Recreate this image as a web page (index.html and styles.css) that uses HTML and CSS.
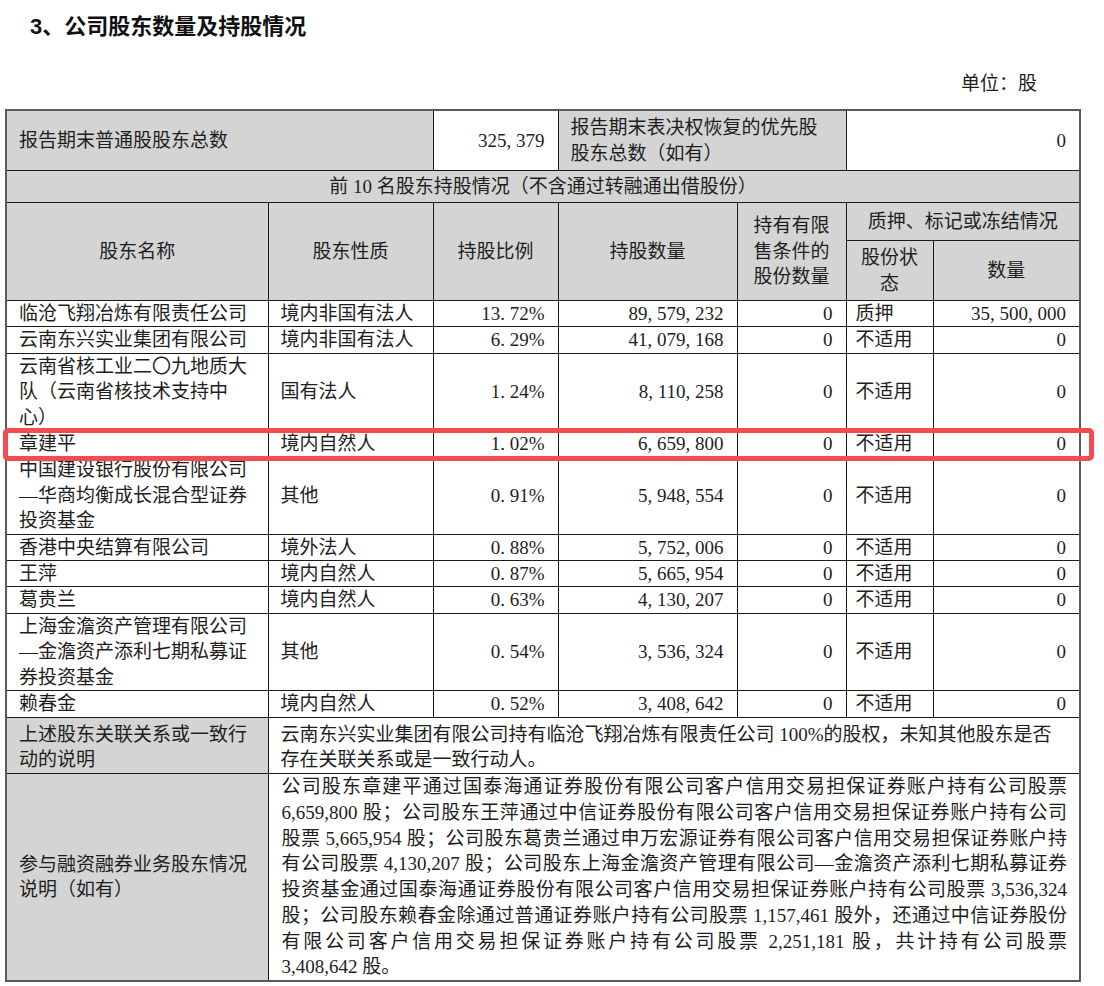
FILE: index.html
```html
<!DOCTYPE html>
<html lang="zh-CN">
<head>
<meta charset="utf-8">
<title>公司股东数量及持股情况</title>
<link rel="stylesheet" href="styles.css">
</head>
<body>
<div class="page">
  <h1 class="title">3、公司股东数量及持股情况</h1>
  <div class="unit">单位：股</div>
  <table class="holders">
    <colgroup>
      <col class="c-name"><col class="c-kind"><col class="c-ratio"><col class="c-qty"><col class="c-restr"><col class="c-state"><col class="c-pledge">
    </colgroup>
    <tr class="r-total">
      <td colspan="2" class="g">报告期末普通股股东总数</td>
      <td class="num">325, 379</td>
      <td colspan="2" class="g">报告期末表决权恢复的优先股<br>股东总数（如有）</td>
      <td colspan="2" class="num">0</td>
    </tr>
    <tr class="r-cap">
      <td colspan="7" class="g ctr">前 10 名股东持股情况（不含通过转融通出借股份）</td>
    </tr>
    <tr class="r-h1">
      <th rowspan="2">股东名称</th>
      <th rowspan="2">股东性质</th>
      <th rowspan="2">持股比例</th>
      <th rowspan="2">持股数量</th>
      <th rowspan="2">持有有限<br>售条件的<br>股份数量</th>
      <th colspan="2">质押、标记或冻结情况</th>
    </tr>
    <tr class="r-h2">
      <th>股份状<br>态</th>
      <th>数量</th>
    </tr>
    <tr>
      <td>临沧飞翔冶炼有限责任公司</td><td>境内非国有法人</td><td class="num">13. 72%</td><td class="num">89, 579, 232</td><td class="num">0</td><td class="st">质押</td><td class="num">35, 500, 000</td>
    </tr>
    <tr>
      <td>云南东兴实业集团有限公司</td><td>境内非国有法人</td><td class="num">6. 29%</td><td class="num">41, 079, 168</td><td class="num">0</td><td class="st">不适用</td><td class="num">0</td>
    </tr>
    <tr>
      <td>云南省核工业二〇九地质大<br>队（云南省核技术支持中<br>心）</td><td>国有法人</td><td class="num">1. 24%</td><td class="num">8, 110, 258</td><td class="num">0</td><td class="st">不适用</td><td class="num">0</td>
    </tr>
    <tr class="hl">
      <td class="mark-host">章建平<span class="mark"></span></td><td>境内自然人</td><td class="num">1. 02%</td><td class="num">6, 659, 800</td><td class="num">0</td><td class="st">不适用</td><td class="num">0</td>
    </tr>
    <tr>
      <td>中国建设银行股份有限公司<br>—华商均衡成长混合型证券<br>投资基金</td><td>其他</td><td class="num">0. 91%</td><td class="num">5, 948, 554</td><td class="num">0</td><td class="st">不适用</td><td class="num">0</td>
    </tr>
    <tr>
      <td>香港中央结算有限公司</td><td>境外法人</td><td class="num">0. 88%</td><td class="num">5, 752, 006</td><td class="num">0</td><td class="st">不适用</td><td class="num">0</td>
    </tr>
    <tr>
      <td>王萍</td><td>境内自然人</td><td class="num">0. 87%</td><td class="num">5, 665, 954</td><td class="num">0</td><td class="st">不适用</td><td class="num">0</td>
    </tr>
    <tr>
      <td>葛贵兰</td><td>境内自然人</td><td class="num">0. 63%</td><td class="num">4, 130, 207</td><td class="num">0</td><td class="st">不适用</td><td class="num">0</td>
    </tr>
    <tr>
      <td>上海金澹资产管理有限公司<br>—金澹资产添利七期私募证<br>券投资基金</td><td>其他</td><td class="num">0. 54%</td><td class="num">3, 536, 324</td><td class="num">0</td><td class="st">不适用</td><td class="num">0</td>
    </tr>
    <tr>
      <td>赖春金</td><td>境内自然人</td><td class="num">0. 52%</td><td class="num">3, 408, 642</td><td class="num">0</td><td class="st">不适用</td><td class="num">0</td>
    </tr>
    <tr class="r-note">
      <td class="g">上述股东关联关系或一致行<br>动的说明</td>
      <td colspan="6" class="top">云南东兴实业集团有限公司持有临沧飞翔冶炼有限责任公司 100%的股权，未知其他股东是否<br>存在关联关系或是一致行动人。</td>
    </tr>
    <tr class="r-margin">
      <td class="g">参与融资融券业务股东情况<br>说明（如有）</td>
      <td colspan="6" class="para">
        <div class="ln">公司股东章建平通过国泰海通证券股份有限公司客户信用交易担保证券账户持有公司股票</div>
        <div class="ln">6,659,800 股；公司股东王萍通过中信证券股份有限公司客户信用交易担保证券账户持有公司</div>
        <div class="ln">股票 5,665,954 股；公司股东葛贵兰通过申万宏源证券有限公司客户信用交易担保证券账户持</div>
        <div class="ln">有公司股票 4,130,207 股；公司股东上海金澹资产管理有限公司—金澹资产添利七期私募证券</div>
        <div class="ln">投资基金通过国泰海通证券股份有限公司客户信用交易担保证券账户持有公司股票 3,536,324</div>
        <div class="ln">股；公司股东赖春金除通过普通证券账户持有公司股票 1,157,461 股外，还通过中信证券股份</div>
        <div class="ln">有限公司客户信用交易担保证券账户持有公司股票 2,251,181 股，共计持有公司股票</div>
        <div class="ln last">3,408,642 股。</div>
      </td>
    </tr>
  </table>
</div>
</body>
</html>
```
FILE: styles.css
```css
html, body {
  margin: 0;
  padding: 0;
  background: #ffffff;
}

.page {
  font-family: "Liberation Serif", "Noto Sans CJK SC", serif;
  font-size: 19px;
  color: #1e1e1e;
  width: 1104px;
}

.title {
  margin: 12px 0 0 30px;
  font-family: "Liberation Sans", "Noto Sans CJK SC", sans-serif;
  font-size: 22px;
  font-weight: bold;
  line-height: 30px;
  color: #111;
}

.unit {
  margin-top: 29px;
  padding-right: 67px;
  text-align: right;
  line-height: 26px;
}

.holders {
  margin: 12px 0 0 5px;
  width: 1076px;
  table-layout: fixed;
  border-collapse: collapse;
  border: 2px solid #5a5a5a;
}

.c-name { width: 262px; }
.c-kind { width: 165px; }
.c-ratio { width: 125px; }
.c-qty { width: 179px; }
.c-restr { width: 109px; }
.c-state { width: 87px; }
.c-pledge { width: 147px; }

.holders td,
.holders th {
  border: 1px solid #1a1a1a;
  padding: 0 12px;
  line-height: 25.4px;
  vertical-align: middle;
  text-align: left;
  font-weight: normal;
  white-space: nowrap;
}

.holders th {
  background: #d4d4d4;
  text-align: center;
  padding: 0 6px;
}

.holders .g {
  background: #d4d4d4;
}

.holders .num {
  text-align: right;
  padding-right: 13px;
}

.holders .st {
  padding-left: 9px;
}

.holders .ctr {
  text-align: center;
}

.r-total td {
  height: 55px;
  padding-top: 2px;
  padding-bottom: 2px;
}

.r-cap td {
  height: 31px;
}

.r-h1 th {
  height: 37px;
}

.r-h2 th {
  height: 59px;
}

.r-note td {
  height: 50px;
  padding-top: 4px;
  padding-bottom: 1px;
}

.holders .top {
  vertical-align: top;
}

.holders .para {
  white-space: normal;
  padding: 0 12px 0 13px;
  line-height: 25.7px;
}

.ln {
  text-align: justify;
  text-align-last: justify;
  text-justify: inter-character;
  white-space: nowrap;
}

.ln.last {
  text-align: left;
  text-align-last: left;
}

.mark-host {
  position: relative;
}

.mark {
  position: absolute;
  left: -4px;
  top: -3px;
  width: 1091px;
  height: 33px;
  box-sizing: border-box;
  border: 5px solid #f24c51;
  border-radius: 5px;
  pointer-events: none;
}
```
